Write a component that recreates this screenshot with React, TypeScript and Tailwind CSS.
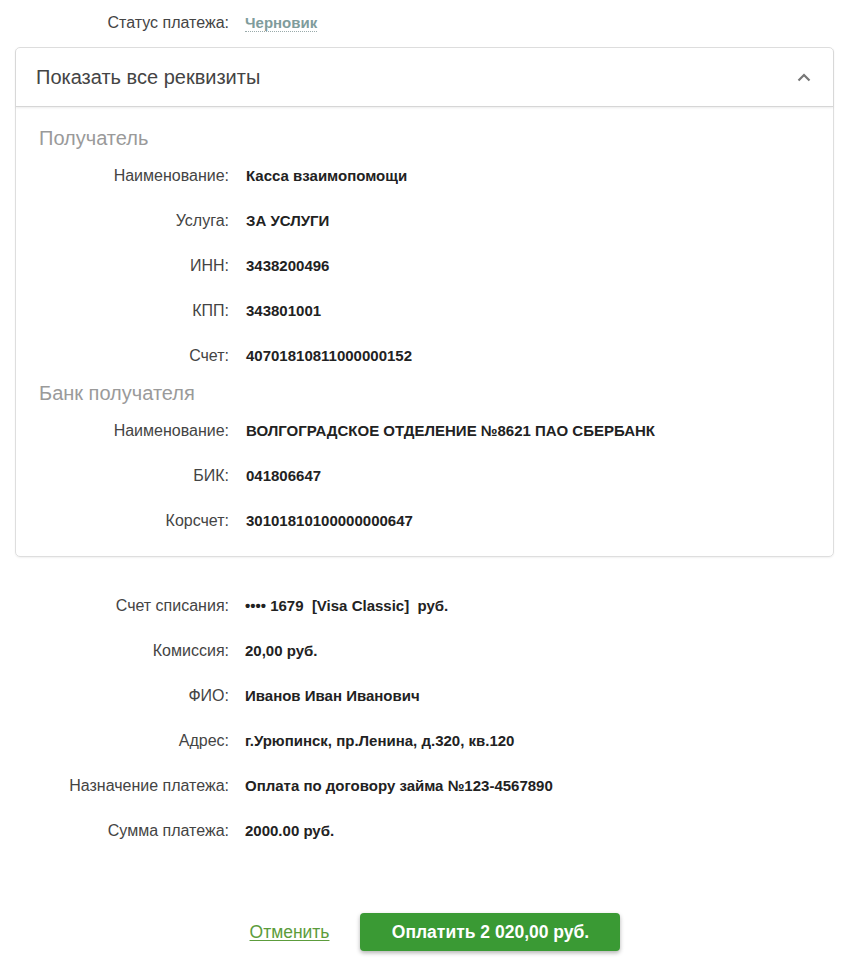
import React from "react";

const font = { fontFamily: '"Liberation Sans", Arial, sans-serif' };

function Row({ label, value, inCard = false }: { label: string; value: React.ReactNode; inCard?: boolean }) {
  return (
    <div className="flex h-[45px] items-center pt-[1px]">
      <div
        className={
          (inCard ? "w-[213px]" : "w-[229px]") +
          " shrink-0 text-right text-[16px] text-[#444]"
        }
      >
        {label}
      </div>
      <div className={(inCard ? "pl-[17px]" : "pl-[16px]") + " text-[15px] font-bold text-[#222]"}>
        {value}
      </div>
    </div>
  );
}

export default function App() {
  return (
    <div style={font} className="w-[867px] min-h-[972px] bg-white">
      <div className="flex h-[45px] items-center">
        <div className="w-[229px] shrink-0 text-right text-[16px] text-[#444]">Статус платежа:</div>
        <div className="pl-[16px]">
          <span className="text-[15px] font-bold text-[#7f9c9c] border-b border-dotted border-[#9aa]">
            Черновик
          </span>
        </div>
      </div>

      <div className="ml-[15px] mt-[2px] w-[819px] rounded-[5px] border border-[#dedede] shadow-[0_1px_2px_rgba(0,0,0,0.06)]">
        <div className="flex h-[59px] items-center justify-between border-b border-[#d6d6d6] pl-[20px] pr-[22px] shadow-[0_1px_2px_rgba(0,0,0,0.08)]">
          <span className="text-[20px] text-[#444]">Показать все реквизиты</span>
          <svg width="14" height="9" viewBox="0 0 14 9">
            <path d="M1.5 7.5 L7 2 L12.5 7.5" fill="none" stroke="#777" strokeWidth="2.2" />
          </svg>
        </div>
        <div className="pt-[16px] pb-[13px]">
          <div className="flex h-[30px] items-center pl-[23px] text-[20px] text-[#9a9a9a]">Получатель</div>
          <Row inCard label="Наименование:" value="Касса взаимопомощи" />
          <Row inCard label="Услуга:" value="ЗА УСЛУГИ" />
          <Row inCard label="ИНН:" value="3438200496" />
          <Row inCard label="КПП:" value="343801001" />
          <Row inCard label="Счет:" value="40701810811000000152" />
          <div className="flex h-[30px] items-center pl-[23px] text-[20px] text-[#9a9a9a]">Банк получателя</div>
          <Row inCard label="Наименование:" value="ВОЛГОГРАДСКОЕ ОТДЕЛЕНИЕ №8621 ПАО СБЕРБАНК" />
          <Row inCard label="БИК:" value="041806647" />
          <Row inCard label="Корсчет:" value="30101810100000000647" />
        </div>
      </div>

      <div className="mt-[26px]">
        <Row label="Счет списания:" value={<span className="whitespace-pre">{"•••• 1679  [Visa Classic]  руб."}</span>} />
        <Row label="Комиссия:" value="20,00 руб." />
        <Row label="ФИО:" value="Иванов Иван Иванович" />
        <Row label="Адрес:" value="г.Урюпинск, пр.Ленина, д.320, кв.120" />
        <Row label="Назначение платежа:" value="Оплата по договору займа №123-4567890" />
        <Row label="Сумма платежа:" value="2000.00 руб." />
      </div>

      <div className="mt-[60px] flex items-center justify-center gap-[31px] pl-[3px]">
        <a href="#" className="text-[17.5px] text-[#5c9c3c] underline underline-offset-2">
          Отменить
        </a>
        <button className="h-[38px] w-[260px] rounded-[4px] bg-[#3a9a34] text-[17.5px] font-bold text-white shadow-[0_2px_4px_rgba(0,0,0,0.3)]">
          Оплатить 2 020,00 руб.
        </button>
      </div>
    </div>
  );
}
